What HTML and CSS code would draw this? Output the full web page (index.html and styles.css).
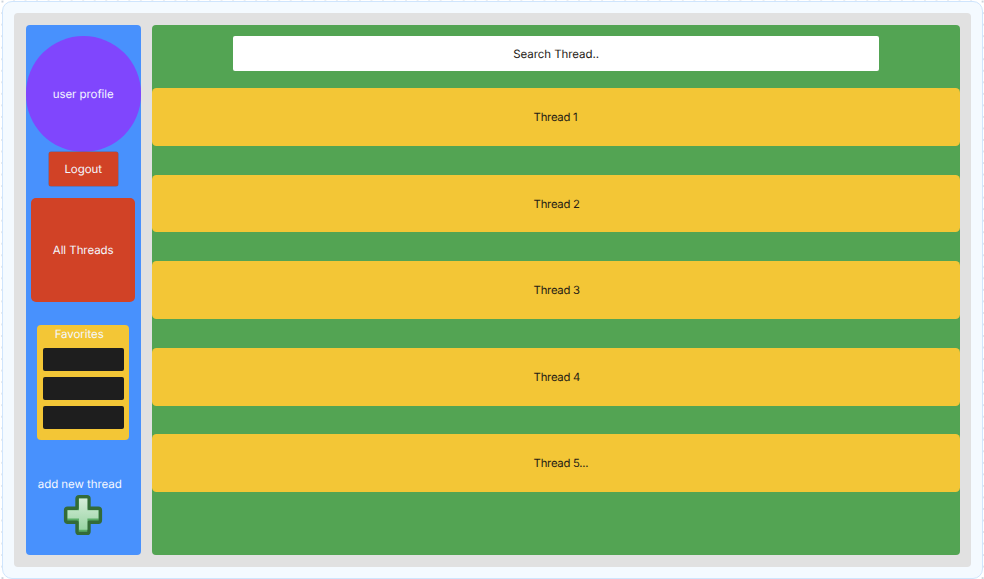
FILE: index.html
```html
<!DOCTYPE html>
<html lang="en">
<head>
<meta charset="utf-8">
<title>Threads</title>
<link rel="stylesheet" href="styles.css">
</head>
<body>
<div class="frame">
  <div class="app">
    <aside class="sidebar">
      <div class="profile">user profile</div>
      <div class="logout">Logout</div>
      <div class="all-threads">All Threads</div>
      <section class="favorites">
        <div class="favorites-title">Favorites</div>
        <div class="favorite"></div>
        <div class="favorite"></div>
        <div class="favorite"></div>
      </section>
      <div class="add-label">add new thread</div>
      <svg class="plus" viewBox="0 0 40 42" width="40" height="42">
        <defs>
          <linearGradient id="face" x1="0" y1="0" x2="0" y2="1">
            <stop offset="0" stop-color="#d5edd8"/>
            <stop offset="1" stop-color="#98d3a3"/>
          </linearGradient>
        </defs>
        <path d="M16 2.8h8q2 0 2 2v9.4h9.4q2 0 2 2v10q0 2-2 2H26v9.2q0 2-2 2h-8q-2 0-2-2v-9.2H4.6q-2 0-2-2v-10q0-2 2-2H14V4.8q0-2 2-2z" fill="#59ab66" stroke="#336b38" stroke-width="3.4" stroke-linejoin="round"/>
        <path d="M16 4.6h8.4v11.6h11v8.3h-11v11.2H16V24.5H4.6v-8.3H16z" fill="url(#face)"/>
      </svg>
    </aside>
    <main class="content">
      <div class="search">Search Thread..</div>
      <div class="thread"><span class="thread-name">Thread 1</span></div>
      <div class="thread"><span class="thread-name">Thread 2</span></div>
      <div class="thread"><span class="thread-name">Thread 3</span></div>
      <div class="thread"><span class="thread-name">Thread 4</span></div>
      <div class="thread"><span class="thread-name">Thread 5...</span></div>
    </main>
  </div>
</div>
</body>
</html>
```
FILE: styles.css
```css
* { box-sizing: border-box; }

body {
  margin: 0;
  width: 984px;
  height: 579px;
  padding: 1px 1px 0 2px;
  overflow: hidden;
  font: 11.5px/16px Inter, sans-serif;
  letter-spacing: -0.06px;
  text-rendering: geometricPrecision;
  color: #252015;
  background: #fff radial-gradient(circle, #cbd3dc 0.7px, transparent 1px) -3.3px -4.2px / 11.535px 11.535px;
}

.frame {
  height: 577.5px;
  padding: 11.3px 10.7px 10.5px 11px;
  border: 1px solid #cfe5fd;
  border-radius: 10px;
  background: #f4faff;
}

.app {
  display: flex;
  gap: 11.5px;
  height: 553.7px;
  padding: 11.5px;
  border-radius: 4px;
  background: #e1e1e1;
}

.sidebar {
  display: flex;
  flex-direction: column;
  align-items: center;
  flex: none;
  width: 115.4px;
  padding-top: 11.5px;
  border-radius: 4px;
  background: #4891fd;
  color: #f4f8ff;
}

.profile, .logout, .all-threads, .search, .thread {
  display: flex;
  align-items: center;
  justify-content: center;
  flex: none;
}

.profile {
  width: 115.4px;
  height: 115.4px;
  padding-top: 1px;
  border-radius: 50%;
  background: #8046fd;
}

.logout {
  width: 69.4px;
  height: 34.6px;
  padding-top: 1px;
  border-radius: 2px;
  background: #d14226;
  box-shadow: 0 0 0 0.5px #7d5b70;
}

.all-threads {
  width: 104px;
  height: 104px;
  margin-top: 11.5px;
  padding-top: 1px;
  border-radius: 5px;
  background: #d14226;
}

.favorites {
  display: flex;
  flex-direction: column;
  gap: 5.8px;
  width: 92.3px;
  height: 115.4px;
  margin-top: 23px;
  padding: 0 5.7px;
  border-radius: 4px;
  background: #f3c636;
}

.favorites-title {
  height: 17.3px;
  padding: 1px 8px 0 0;
  text-align: center;
}

.favorite {
  height: 23.1px;
  border-radius: 2px;
  background: #1e1e1e;
}

.add-label {
  margin: 35.5px 7px 0 0;
  white-space: nowrap;
}

.plus { margin-top: 2.5px; flex: none; }

.content {
  display: flex;
  flex-direction: column;
  align-items: center;
  flex: 1;
  gap: 28.85px;
  padding-top: 11.5px;
  border-radius: 4px;
  background: #53a453;
}

.search {
  width: 646px;
  height: 34.6px;
  margin-bottom: -11.5px;
  border-radius: 2px;
  background: #fff;
}

.thread {
  width: 100%;
  height: 57.7px;
  border-radius: 4.5px;
  background: #f3c636;
  font-size: 11.3px;
  letter-spacing: -0.25px;
}

.thread-name {
  width: 45px;
  white-space: nowrap;
}
```
